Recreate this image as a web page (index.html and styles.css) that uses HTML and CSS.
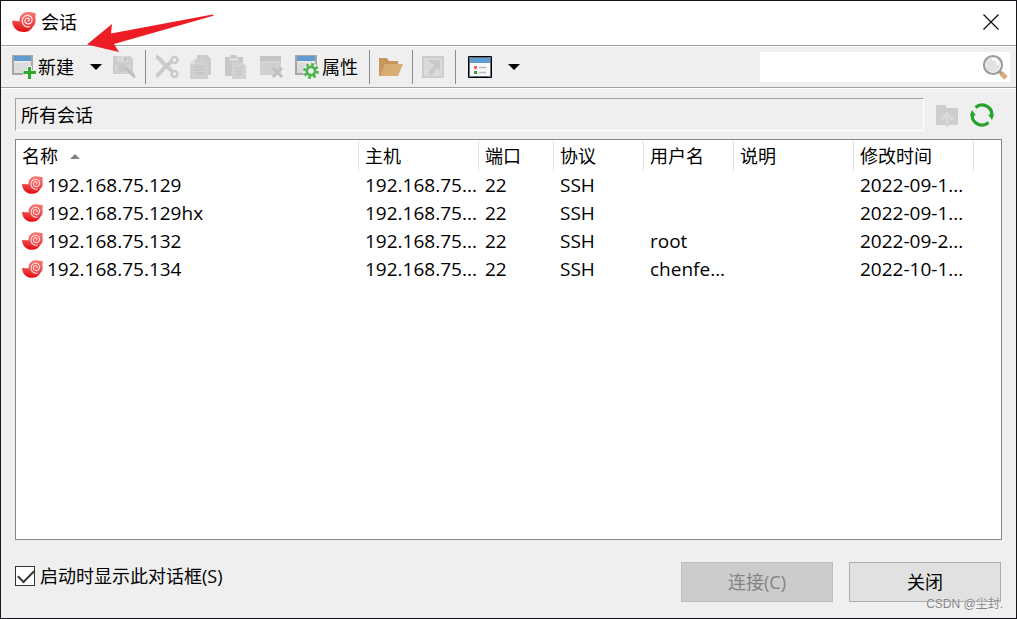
FILE: index.html
```html
<!DOCTYPE html>
<html lang="zh-CN">
<head>
<meta charset="utf-8">
<meta name="viewport" content="width=device-width, initial-scale=1">
<title>会话</title>
<link rel="stylesheet" href="styles.css">
</head>
<body>
<svg class="defs" aria-hidden="true">
  <defs>
    <linearGradient id="body-red" x1="0" y1="0" x2="0" y2="1"><stop offset="0" stop-color="#ee4a47"/><stop offset="1" stop-color="#e30d12"/></linearGradient>
    <linearGradient id="head-red" x1="0" y1="0" x2="0" y2="1"><stop offset="0" stop-color="#f77a75"/><stop offset="1" stop-color="#ea3438"/></linearGradient>
    <symbol id="shell" viewBox="0 0 24 20">
      <path d="M0 9c3-.6 5 .6 8 .2 1 5 8 8 13 5-1.500 3.500-5 5.800-9.500 5.800C5 20 .5 15.500 0 9z" fill="url(#body-red)"/>
      <path d="M15 0c3.500-.4 6 1 8.500 1 .5 2-.3 3.500 0 6 .8 5.500-3 9.500-8 9.500-4.500 0-8-3.500-8-8C7.500 4 10.500.500 15 0z" fill="url(#head-red)"/>
      <path d="M15.600 8.700c1.500.6 2.400-1.200 1.100-2.200-1.800-1.200-4.300.6-3.700 3 .7 3 5.300 3.200 6.700.2C21.300 6.300 18.500 3 15 3.400c-4 .5-5.700 4.600-4.200 7.900 1.200 2.500 4 4 7 3.300" fill="none" stroke="#fff" stroke-opacity=".85" stroke-width="1.200"/>
    </symbol>
  </defs>
</svg>
<main class="dialog">
  <header class="titlebar">
    <svg class="app-icon"><use href="#shell"/></svg>
    <h1 class="title">会话</h1>
    <button class="close-x" aria-label="关闭窗口"><svg width="16" height="16" viewBox="0 0 16 16"><path d="M.5.500l15 15M15.500.500l-15 15" stroke="#000" stroke-width="1.100"/></svg></button>
  </header>

  <div class="toolbar" role="toolbar">
    <button class="tool">
      <svg class="icon" viewBox="0 0 24 24"><path d="M1 1h19v18H1z" fill="#dcdcdc" stroke="#a6a6a6" stroke-width="2"/><path d="M2 1h17v5H2z" fill="#629bd2"/><path d="M2 7h17" stroke="#f7f7f7"/><path d="M15 11h5v4h4v5h-4v4h-5v-4h-4v-5h4z" fill="#efefef"/><path d="M17.500 12v12M11.500 17.500H24" stroke="#29ad29" stroke-width="3"/></svg>
      <span>新建</span>
    </button>
    <button class="tool drop" aria-label="新建选项"><svg width="12" height="6" viewBox="0 0 12 6"><path d="M0 0h12L6 6z"/></svg></button>
    <button class="tool" disabled aria-label="另存为"><svg class="icon" viewBox="0 0 24 24"><path d="M1 1h17l3 3v15H1z" fill="#cdcdcd"/><path d="M5 1h11v6H5z" fill="#d9d9d9"/><path d="M12 2h3v4h-3z" fill="#c4c4c4"/><path d="M3 10h16v8H3z" fill="#d4d4d4"/><circle cx="10" cy="13" r="4" fill="#c7c7c7"/><path d="M12 13l8 8 3 2-1-4-7-7z" fill="#c0c0c0" stroke="#c0c0c0"/></svg></button>
    <span class="sep"></span>
    <button class="tool" disabled aria-label="剪切"><svg class="icon" viewBox="0 0 24 24" fill="none" stroke="#cacaca"><path d="M1 2c3 0 5 4 8 7l8 7M1 21c3-1 5-4 8-8l8-7" stroke-width="4"/><circle cx="19.500" cy="5" r="3" stroke-width="2.500"/><circle cx="19.500" cy="19" r="3" stroke-width="2.500"/></svg></button>
    <button class="tool" disabled aria-label="复制"><svg class="icon" viewBox="0 0 24 24"><path d="M7 0h10l4 4v16H7z" fill="#cbcbcb"/><path d="M5 4h9l4 4v16H0V9z" fill="#d0d0d0"/><path d="M5 4v5H0" fill="#dedede"/><path d="M4 12h10M4 15h10M4 18h10" stroke="#bfbfbf"/></svg></button>
    <button class="tool" disabled aria-label="粘贴"><svg class="icon" viewBox="0 0 24 24"><path d="M0 2h5l1-2h5l1 2h6v19H0z" fill="#c8c8c8"/><path d="M4 3h9v3H4z" fill="#dcdcdc"/><path d="M7 7h10l4 4v13H7z" fill="#d2d2d2"/><path d="M10 13h7M10 16h7M10 19h7" stroke="#bfbfbf"/></svg></button>
    <button class="tool" disabled aria-label="删除"><svg class="icon" viewBox="0 0 24 24"><path d="M0 1h21v19H0z" fill="#d0d0d0"/><path d="M0 1h21v6H0z" fill="#c6c6c6"/><path d="M0 7h21" stroke="#ddd"/><path d="M13 13l9 9M22 13l-9 9" stroke="#c0c0c0" stroke-width="3"/></svg></button>
    <button class="tool props">
      <svg class="icon" viewBox="0 0 24 24"><path d="M1 1h20v18H1z" fill="#dadada" stroke="#a6a6a6" stroke-width="2"/><path d="M2 1h18v5H2z" fill="#629bd2"/><path d="M2 7h18" stroke="#f5f5f5"/><circle cx="16" cy="16" r="8" fill="#efefef"/><circle cx="16" cy="16" r="4.200" fill="none" stroke="#4bb34b" stroke-width="2.800"/><circle cx="16" cy="16" r="6.600" fill="none" stroke="#4bb34b" stroke-width="2.600" stroke-dasharray="2.700 2.480"/></svg>
      <span>属性</span>
    </button>
    <span class="sep"></span>
    <button class="tool" aria-label="打开文件夹"><svg class="icon" viewBox="0 0 24 24"><path d="M0 3h8l2 3h9v5H6L2 21H0z" fill="#c8955c"/><path d="M6 9h18l-5 12H1z" fill="#d8ad72"/></svg></button>
    <span class="sep"></span>
    <button class="tool" disabled aria-label="外部打开"><svg class="icon" viewBox="0 0 24 24"><path d="M1 2h20v20H1z" fill="#dadada" stroke="#cdcdcd" stroke-width="2"/><path d="M7 5h11v11l-3-3-6 8-3-3 6-8-5-4z" fill="#c9c9c9"/></svg></button>
    <span class="sep"></span>
    <button class="tool view" aria-label="视图"><svg class="icon" viewBox="0 0 24 24"><path d="M.5 1.500h23v21H.5z" fill="#f8f8f8" stroke="#000"/><path d="M1.500 2.500h21v19h-21z" fill="#f8f8f8" stroke="#5f6f80"/><path d="M2 3h20v5H2z" fill="#629bd2"/><path d="M6 11h3v3H6z" fill="#f26363"/><path d="M6 16h3v3H6z" fill="#35a935"/><path d="M11 12.500h7M11 17.500h7" stroke="#b8b8b8" stroke-width="1.500"/></svg></button>
    <button class="tool drop" aria-label="视图选项"><svg width="12" height="6" viewBox="0 0 12 6"><path d="M0 0h12L6 6z"/></svg></button>
    <div class="search">
      <input class="search-input" type="text" aria-label="搜索">
      <button class="tool" aria-label="搜索"><svg width="26" height="26" viewBox="0 0 26 26"><path d="M17 17l3 3" stroke="#999" stroke-width="3"/><path d="M19 19l5 5" stroke="#d9ad79" stroke-width="5"/><circle cx="11" cy="11" r="9" fill="#dedede" stroke="#999b9c" stroke-width="2.200"/><circle cx="11" cy="11" r="7.300" fill="#e2e2e2" stroke="#f4f4f4"/><path d="M10 5c4 0 6 2 6 6" stroke="#fff" stroke-width="2" fill="none"/></svg></button>
    </div>
  </div>

  <div class="content">
    <div class="path-row">
      <input class="path" type="text" value="所有会话" readonly aria-label="位置">
      <button class="tool" disabled aria-label="上一级"><svg class="icon" viewBox="0 0 24 24"><path d="M0 2h9l2 3h11v17H0z" fill="#cdcdcd"/><path d="M11 24v-12M5 17l6-6 6 6" stroke="#dadada" stroke-width="3" fill="none"/></svg></button>
      <button class="tool" aria-label="刷新"><svg class="icon" viewBox="0 0 24 24"><path d="M5.500 4.500A9.800 9.800 0 0 1 21.800 12.500M18.500 19.500A9.800 9.800 0 0 1 2.200 11.500" fill="none" stroke="#28a32d" stroke-width="3.200"/><path d="M2 7l4 5.500H0zM22 17l-4-5.500h6z" fill="#28a32d"/></svg></button>
    </div>

    <div class="list">
      <table class="sessions">
        <colgroup><col class="c-name"><col class="c-wide"><col class="c-port"><col class="c-mid"><col class="c-mid"><col class="c-wide"><col class="c-wide"><col></colgroup>
        <thead>
          <tr><th>名称<svg class="sort" width="10" height="5" viewBox="0 0 10 5"><path d="M0 5h10L5 0z" fill="#848484"/></svg></th><th>主机</th><th>端口</th><th>协议</th><th>用户名</th><th>说明</th><th>修改时间</th><td></td></tr>
        </thead>
        <tbody>
          <tr><td><span class="name"><svg class="row-icon"><use href="#shell"/></svg>192.168.75.129</span></td><td>192.168.75...</td><td>22</td><td>SSH</td><td></td><td></td><td>2022-09-1...</td><td></td></tr>
          <tr><td><span class="name"><svg class="row-icon"><use href="#shell"/></svg>192.168.75.129hx</span></td><td>192.168.75...</td><td>22</td><td>SSH</td><td></td><td></td><td>2022-09-1...</td><td></td></tr>
          <tr><td><span class="name"><svg class="row-icon"><use href="#shell"/></svg>192.168.75.132</span></td><td>192.168.75...</td><td>22</td><td>SSH</td><td>root</td><td></td><td>2022-09-2...</td><td></td></tr>
          <tr><td><span class="name"><svg class="row-icon"><use href="#shell"/></svg>192.168.75.134</span></td><td>192.168.75...</td><td>22</td><td>SSH</td><td>chenfe...</td><td></td><td>2022-10-1...</td><td></td></tr>
        </tbody>
      </table>
    </div>

    <footer class="footer">
      <label class="startup"><input class="check" type="checkbox" checked>启动时显示此对话框(S)</label>
      <button class="btn" disabled>连接(C)</button>
      <button class="btn">关闭</button>
    </footer>
  </div>

  <svg class="arrow" width="128" height="40" viewBox="0 0 128 40" aria-hidden="true"><path d="M0 31.500L25 11l-1 9.500L125.500 1.500c1.500 0 1.500 1 0 1.500L27 31l5 8z" fill="#ee1c24"/></svg>
  <span class="watermark">CSDN @尘封.</span>
</main>
</body>
</html>
```
FILE: styles.css
```css
* { box-sizing: border-box; }

body {
  margin: 0;
  background: #efefef;
  color: #000;
  font: 18px/28px "Open Sans", "Noto Sans CJK SC", sans-serif;
}

button, input { font: inherit; color: inherit; }

.defs { position: absolute; width: 0; height: 0; }

.dialog {
  position: relative;
  display: flex;
  flex-direction: column;
  min-height: 100vh;
  border: 1px solid #16161a;
}

.titlebar {
  display: flex;
  align-items: center;
  gap: 5px;
  height: 44px;
  padding: 0 17px 2px 11px;
  background: #fff;
}
.app-icon { width: 24px; height: 20px; }
.title { flex: 1; margin: 0; font-size: 18px; font-weight: 400; }

.close-x, .tool {
  display: flex;
  align-items: center;
  justify-content: center;
  padding: 0;
  border: 0;
  background: none;
}

.toolbar {
  display: flex;
  align-items: center;
  height: 43px;
  padding: 1px 6px 0 11px;
  border-top: 1px solid #a0a0a0;
  border-bottom: 1px solid #a0a0a0;
  box-shadow: inset 0 1px #fff, 0 1px #fff;
}
.icon { width: 24px; height: 24px; flex: none; }
.toolbar .tool { gap: 2px; flex: none; }
.toolbar .drop { width: 32px; height: 30px; margin-left: 6px; }
.toolbar .tool:disabled + .tool { margin-left: 11px; }
.toolbar .props { gap: 3px; }
.toolbar .view { margin-left: 3px; }
.sep { width: 1px; height: 34px; margin: 0 9px; background: #8c8c8c; }
.props + .sep { margin-left: 11px; }

.search {
  display: flex;
  align-items: center;
  width: 250px;
  height: 30px;
  margin-left: auto;
  padding-right: 2px;
  background: #fff;
}
.search-input {
  flex: 1;
  min-width: 0;
  height: 100%;
  padding: 0 6px;
  border: 0;
  background: none;
  outline: 0;
}

.content {
  flex: 1;
  display: flex;
  flex-direction: column;
  padding: 10px 14px 16px;
}

.path-row { display: flex; align-items: center; gap: 10px; padding-right: 8px; }
.path {
  flex: 1;
  min-width: 0;
  height: 33px;
  margin-right: 2px;
  padding: 0 5px 2px;
  border: 1px solid;
  border-color: #a0a0a0 #fff #fff #a0a0a0;
  background: #efefef;
  outline: 0;
}

.list {
  flex: 1;
  margin-top: 8px;
  border: 1px solid #828790;
  background: #fff;
}
.sessions { width: 100%; table-layout: fixed; border-collapse: collapse; }
.c-name { width: 343px; }
.c-wide { width: 120px; }
.c-port { width: 75px; }
.c-mid { width: 90px; }
.sessions th, .sessions td {
  height: 28px;
  padding: 0 0 0 6px;
  text-align: left;
  font-weight: 400;
  white-space: nowrap;
}
.sessions th {
  height: 31px;
  background: linear-gradient(#e2e2e2, #e2e2e2) right bottom / 1px 30px no-repeat;
}
.sessions tbody { font-size: 19px; }
.sort { margin-left: 12px; vertical-align: 4px; }
.name { display: flex; align-items: center; gap: 4px; }
.row-icon { width: 21px; height: 18px; }

.footer {
  display: flex;
  align-items: center;
  gap: 16px;
  margin-top: 22px;
  padding-right: 1px;
}
.startup {
  display: flex;
  align-items: center;
  gap: 5px;
  margin-right: auto;
  padding-bottom: 12px;
}
.check {
  appearance: none;
  width: 20px;
  height: 20px;
  margin: 0;
  border: 1px solid #333;
  background: #fff;
}
.check:checked::before {
  content: "";
  display: block;
  width: 14px;
  height: 7px;
  margin: 3px 2px;
  border: solid #333;
  border-width: 0 0 2px 2px;
  transform: rotate(-45deg);
}
.btn {
  width: 152px;
  height: 40px;
  padding: 0;
  border: 1px solid #adadad;
  background: #e1e1e1;
}
.btn:disabled { border-color: #bfbfbf; background: #ccc; color: #838383; }

.arrow { position: absolute; left: 86px; top: 12px; pointer-events: none; }
.watermark {
  position: absolute;
  right: 13px;
  bottom: 6px;
  color: #858585;
  font: 12px/16px "Liberation Sans", "Noto Sans CJK SC", sans-serif;
  text-shadow: 0 0 1px #fff;
}
```
